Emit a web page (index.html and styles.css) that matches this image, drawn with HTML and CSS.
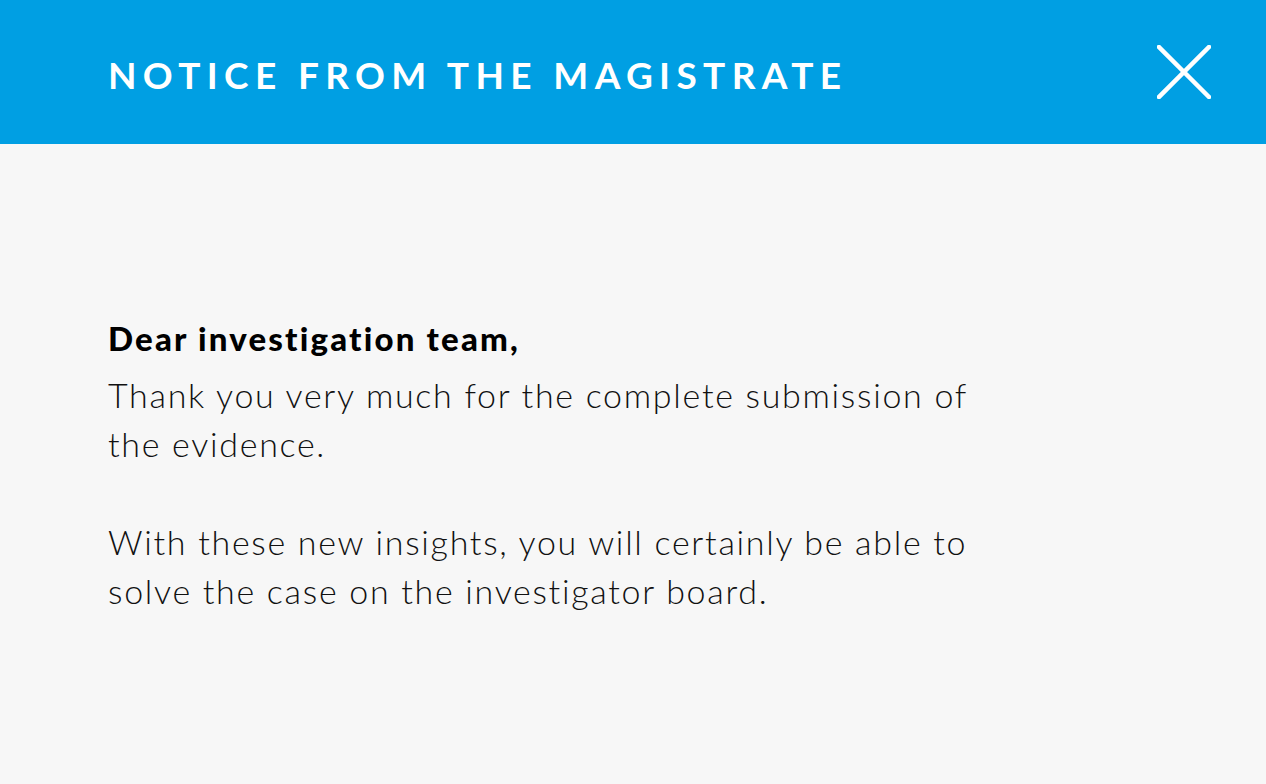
FILE: index.html
```html
<!DOCTYPE html>
<html lang="en">
<head>
<meta charset="utf-8">
<title>Notice from the Magistrate</title>
<link rel="stylesheet" href="styles.css">
</head>
<body>
<div class="dialog">
  <header class="header">
    <h1 class="title">NOTICE FROM THE MAGISTRATE</h1>
    <button class="close" aria-label="Close">
      <svg width="54" height="54" viewBox="0 0 54 54">
        <path d="M2 2 L52 52 M52 2 L2 52" stroke="#fff" stroke-width="4.5" stroke-linecap="square" fill="none"/>
      </svg>
    </button>
  </header>
  <main class="body">
    <p class="greeting">Dear investigation team,</p>
    <p class="text">Thank you very much for the complete submission of<br>the evidence.</p>
    <p class="text">With these new insights, you will certainly be able to<br>solve the case on the investigator board.</p>
  </main>
</div>
</body>
</html>
```
FILE: styles.css
```css
* { box-sizing: border-box; }
html, body { margin: 0; padding: 0; }
body {
  width: 1266px;
  height: 784px;
  overflow: hidden;
  background: #f7f7f7;
  font-family: Lato, "Noto Sans", sans-serif;
  color: #111;
}
.dialog { display: flex; flex-direction: column; height: 100%; }
.header {
  flex: 0 0 144px;
  height: 144px;
  background: #009fe3;
  display: flex;
  align-items: center;
  justify-content: space-between;
  padding: 0 55px 0 108px;
}
.title {
  margin: 4px 0 0;
  color: #fff;
  font-size: 37px;
  font-weight: 700;
  letter-spacing: 0.172em;
}
.close {
  background: none;
  border: 0;
  padding: 0;
  width: 54px;
  height: 54px;
  display: flex;
}
.body { padding: 172px 0 0 108px; }
.greeting {
  margin: 0 0 10px;
  font-size: 33px;
  font-weight: 900;
  line-height: 44px;
  letter-spacing: 0.066em;
  color: #000;
}
.text {
  margin: 0 0 49px;
  font-size: 34px;
  font-weight: 300;
  line-height: 49px;
  letter-spacing: 0.05em;
}
```
